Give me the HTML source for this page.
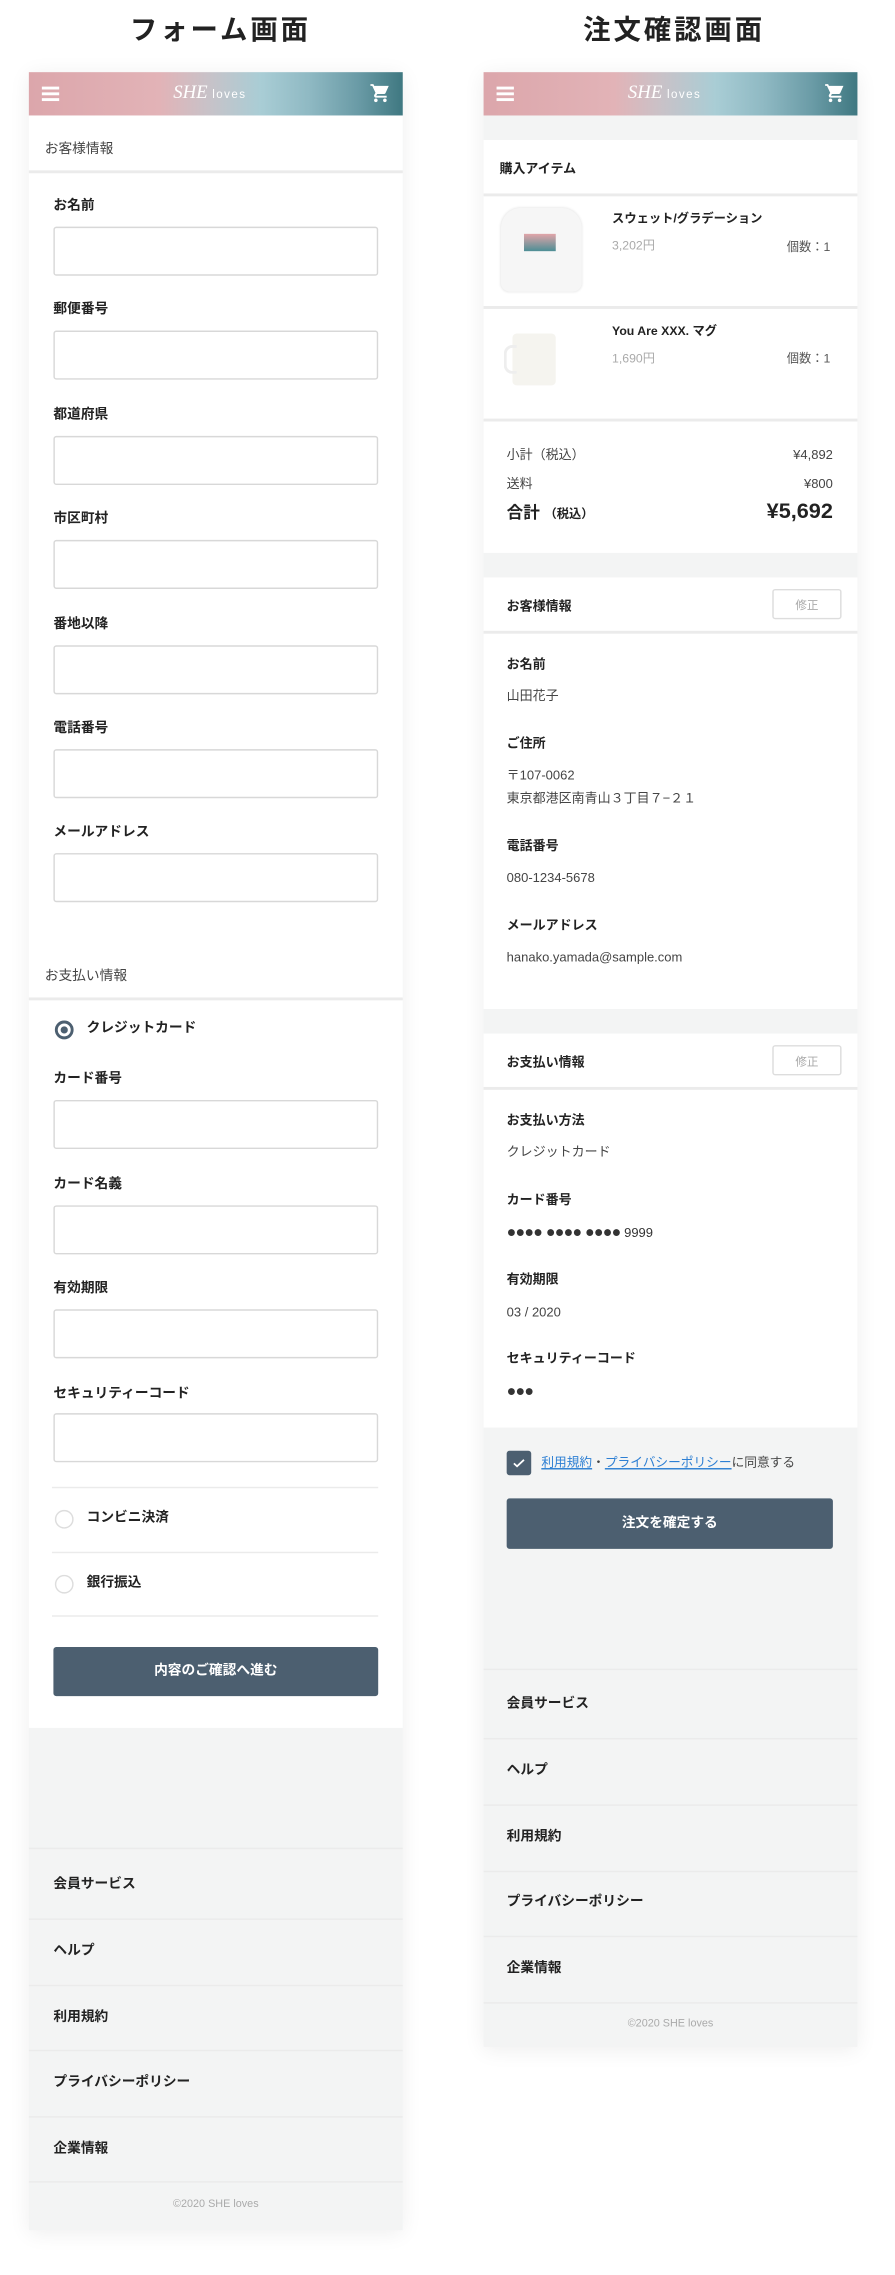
<!DOCTYPE html>
<html><head><meta charset="utf-8"><style>
html,body{margin:0;padding:0;background:#fff;width:895px;height:2275px;overflow:hidden}
#w{position:absolute;left:0;top:0;width:620px;height:1576px;transform:scale(1.4435);transform-origin:0 0;font-family:"Liberation Sans","Noto Sans CJK JP",sans-serif;color:#222}
.a{position:absolute}
.t{position:absolute;line-height:16px;white-space:nowrap}
.ph{position:absolute;background:#f3f4f4;box-shadow:0 2px 14px rgba(0,0,0,.07)}
.hd{position:absolute;left:0;right:0;top:0;height:30px;background:linear-gradient(90deg,#dca6ab 0%,#e2b3b7 35%,#c8c2c8 48%,#a9cdd5 62%,#8fb9c3 75%,#6a9ba6 88%,#3f7881 100%)}
.wh{position:absolute;left:0;right:0;background:#fff}
.ln{position:absolute;height:1px;background:#ebebeb}
.in{position:absolute;left:17px;width:225px;height:34px;border:1px solid #d8d8d8;border-radius:2px;background:#fff;box-sizing:border-box}
.lb{font-size:9.5px;font-weight:bold;color:#222}
.btn{position:absolute;background:#4c5f70;color:#fff;font-size:9.5px;font-weight:bold;text-align:center;border-radius:2px}
.fi{font-size:9.5px;font-weight:bold;color:#222}
.ed{position:absolute;width:48px;height:21px;border:1px solid #ddd;border-radius:2px;font-size:8px;color:#aaa;text-align:center;line-height:21px;box-sizing:border-box;background:#fff}
</style></head><body><div id="w">

<div class="t" style="left:90px;top:12px;font-size:19px;font-weight:bold;letter-spacing:2px;line-height:20px">フォーム画面</div>
<div class="t" style="left:404px;top:12px;font-size:19px;font-weight:bold;letter-spacing:2px;line-height:20px">注文確認画面</div>

<!-- LEFT PHONE -->
<div class="ph" style="left:20px;top:50px;width:259px;height:1495px">
 <div class="hd"><div class="a" style="left:9px;top:10px;width:12px;height:2px;background:#fff;box-shadow:0 4px 0 #fff,0 8px 0 #fff"></div>
  <div class="t" style="left:100px;top:6px;font-size:13px;color:#fff;font-style:italic;font-family:'Liberation Serif',serif">SHE<span style="font-size:8px;font-style:normal;font-family:'Liberation Sans',sans-serif;letter-spacing:1px"> loves</span></div>
  <svg class="a" style="left:236px;top:7px" width="15" height="15" viewBox="0 0 24 24" fill="#fff"><path d="M7 18c-1.1 0-2 .9-2 2s.9 2 2 2 2-.9 2-2-.9-2-2-2zM1 2v2h2l3.6 7.6-1.35 2.4c-.7 1.3.2 3 1.75 3h12v-2H7.4l1.1-2h7.45c.75 0 1.4-.4 1.75-1L21.3 4H5.2l-.9-2H1zm16 16c-1.1 0-2 .9-2 2s.9 2 2 2 2-.9 2-2-.9-2-2-2z"/></svg></div>
 <div class="wh" style="top:30px;height:1117px"></div>
  <div class="t" style="left:11px;top:46px;font-size:9.5px;color:#444">お客様情報</div>
  <div class="ln" style="left:0;right:0;top:68px;height:1.5px"></div>
  <div class="t lb" style="left:17px;top:85px">お名前</div><div class="in" style="top:107px"></div>
  <div class="t lb" style="left:17px;top:157px">郵便番号</div><div class="in" style="top:179px"></div>
  <div class="t lb" style="left:17px;top:230px">都道府県</div><div class="in" style="top:252px"></div>
  <div class="t lb" style="left:17px;top:302px">市区町村</div><div class="in" style="top:324px"></div>
  <div class="t lb" style="left:17px;top:375px">番地以降</div><div class="in" style="top:397px"></div>
  <div class="t lb" style="left:17px;top:447px">電話番号</div><div class="in" style="top:469px"></div>
  <div class="t lb" style="left:17px;top:519px">メールアドレス</div><div class="in" style="top:541px"></div>
  <div class="t" style="left:11px;top:619px;font-size:9.5px;color:#444">お支払い情報</div>
  <div class="ln" style="left:0;right:0;top:641px;height:1.5px"></div>
  <div class="a" style="left:18px;top:657px;width:9px;height:9px;border:2px solid #4c5f70;border-radius:50%"></div>
  <div class="a" style="left:22px;top:661px;width:5px;height:5px;background:#4c5f70;border-radius:50%"></div>
  <div class="t lb" style="left:40px;top:655px">クレジットカード</div>
  <div class="t lb" style="left:17px;top:690px">カード番号</div><div class="in" style="top:712px"></div>
  <div class="t lb" style="left:17px;top:763px">カード名義</div><div class="in" style="top:785px"></div>
  <div class="t lb" style="left:17px;top:835px">有効期限</div><div class="in" style="top:857px"></div>
  <div class="t lb" style="left:17px;top:908px">セキュリティーコード</div><div class="in" style="top:929px"></div>
  <div class="ln" style="left:16px;width:226px;top:980px"></div>
  <div class="a" style="left:18px;top:996px;width:11px;height:11px;border:1px solid #ddd;border-radius:50%"></div>
  <div class="t lb" style="left:40px;top:994px">コンビニ決済</div>
  <div class="ln" style="left:16px;width:226px;top:1025px"></div>
  <div class="a" style="left:18px;top:1041px;width:11px;height:11px;border:1px solid #ddd;border-radius:50%"></div>
  <div class="t lb" style="left:40px;top:1039px">銀行振込</div>
  <div class="ln" style="left:16px;width:226px;top:1069px"></div>
  <div class="btn" style="left:17px;top:1091px;width:225px;height:34px;line-height:34px">内容のご確認へ進む</div>
 <div class="ln" style="left:0;right:0;top:1230px"></div><div class="t fi" style="left:17px;top:1248px">会員サービス</div>
 <div class="ln" style="left:0;right:0;top:1279px"></div><div class="t fi" style="left:17px;top:1294px">ヘルプ</div>
 <div class="ln" style="left:0;right:0;top:1325px"></div><div class="t fi" style="left:17px;top:1340px">利用規約</div>
 <div class="ln" style="left:0;right:0;top:1370px"></div><div class="t fi" style="left:17px;top:1385px">プライバシーポリシー</div>
 <div class="ln" style="left:0;right:0;top:1416px"></div><div class="t fi" style="left:17px;top:1431px">企業情報</div>
 <div class="ln" style="left:0;right:0;top:1461px"></div><div class="t" style="left:0;right:0;text-align:center;top:1469px;font-size:7.5px;color:#aaa">©2020 SHE loves</div>
</div>

<!-- RIGHT PHONE -->
<div class="ph" style="left:335px;top:50px;width:259px;height:1368px">
 <div class="hd"><div class="a" style="left:9px;top:10px;width:12px;height:2px;background:#fff;box-shadow:0 4px 0 #fff,0 8px 0 #fff"></div>
  <div class="t" style="left:100px;top:6px;font-size:13px;color:#fff;font-style:italic;font-family:'Liberation Serif',serif">SHE<span style="font-size:8px;font-style:normal;font-family:'Liberation Sans',sans-serif;letter-spacing:1px"> loves</span></div>
  <svg class="a" style="left:236px;top:7px" width="15" height="15" viewBox="0 0 24 24" fill="#fff"><path d="M7 18c-1.1 0-2 .9-2 2s.9 2 2 2 2-.9 2-2-.9-2-2-2zM1 2v2h2l3.6 7.6-1.35 2.4c-.7 1.3.2 3 1.75 3h12v-2H7.4l1.1-2h7.45c.75 0 1.4-.4 1.75-1L21.3 4H5.2l-.9-2H1zm16 16c-1.1 0-2 .9-2 2s.9 2 2 2 2-.9 2-2-.9-2-2-2z"/></svg></div>
 <div class="wh" style="top:47px;height:286px">
  <div class="t fi" style="left:11px;top:12px;font-size:9px">購入アイテム</div>
  <div class="ln" style="left:0;right:0;top:37px;height:1.5px"></div>
  <div class="a" style="left:12px;top:47px;width:56px;height:58px;background:#f6f6f6;border-radius:14px 14px 6px 6px;box-shadow:0 0 2px #e4e4e4"></div>
  <div class="a" style="left:28px;top:65px;width:22px;height:12px;background:linear-gradient(#e2a5a9,#4c8e95)"></div>
  <div class="t" style="left:89px;top:46px;font-size:8.5px;font-weight:bold">スウェット/グラデーション</div>
  <div class="t" style="left:89px;top:65px;font-size:8.5px;color:#aaa">3,202円</div>
  <div class="t" style="left:210px;top:66px;font-size:8.5px;color:#555">個数：1</div>
  <div class="ln" style="left:0;right:0;top:115px;height:1.5px"></div>
  <div class="a" style="left:20px;top:134px;width:30px;height:36px;background:#f5f4ef;border-radius:3px"></div>
  <div class="a" style="left:14px;top:142px;width:7px;height:16px;border:2px solid #eee;border-radius:6px 0 0 6px;border-right:0"></div>
  <div class="t" style="left:89px;top:124px;font-size:8.5px;font-weight:bold">You Are XXX. マグ</div>
  <div class="t" style="left:89px;top:143px;font-size:8.5px;color:#aaa">1,690円</div>
  <div class="t" style="left:210px;top:143px;font-size:8.5px;color:#555">個数：1</div>
  <div class="ln" style="left:0;right:0;top:193px;height:1.5px"></div>
  <div class="t" style="left:16px;top:210px;font-size:9px;color:#444">小計（税込）</div><div class="t" style="right:17px;top:210px;font-size:9px;color:#444">¥4,892</div>
  <div class="t" style="left:16px;top:230px;font-size:9px;color:#444">送料</div><div class="t" style="right:17px;top:230px;font-size:9px;color:#444">¥800</div>
  <div class="t" style="left:16px;top:251px;font-size:11.5px;font-weight:bold">合計 <span style="font-size:8.5px">（税込）</span></div><div class="t" style="right:17px;top:250px;font-size:15px;font-weight:bold">¥5,692</div>
 </div>
 <div class="wh" style="top:350px;height:299px">
  <div class="t fi" style="left:16px;top:12px;font-size:9px">お客様情報</div>
  <div class="ed" style="left:200px;top:8px">修正</div>
  <div class="ln" style="left:0;right:0;top:37px;height:1.5px"></div>
  <div class="t fi" style="left:16px;top:52px;font-size:9px">お名前</div>
  <div class="t" style="left:16px;top:74px;font-size:9px;color:#444">山田花子</div>
  <div class="t fi" style="left:16px;top:107px;font-size:9px">ご住所</div>
  <div class="t" style="left:16px;top:129px;font-size:9px;color:#444">〒107-0062</div>
  <div class="t" style="left:16px;top:145px;font-size:9px;color:#444">東京都港区南青山３丁目７−２１</div>
  <div class="t fi" style="left:16px;top:178px;font-size:9px">電話番号</div>
  <div class="t" style="left:16px;top:200px;font-size:9px;color:#444">080-1234-5678</div>
  <div class="t fi" style="left:16px;top:233px;font-size:9px">メールアドレス</div>
  <div class="t" style="left:16px;top:255px;font-size:9px;color:#444">hanako.yamada@sample.com</div>
 </div>
 <div class="wh" style="top:666px;height:273px">
  <div class="t fi" style="left:16px;top:12px;font-size:9px">お支払い情報</div>
  <div class="ed" style="left:200px;top:8px">修正</div>
  <div class="ln" style="left:0;right:0;top:37px;height:1.5px"></div>
  <div class="t fi" style="left:16px;top:52px;font-size:9px">お支払い方法</div>
  <div class="t" style="left:16px;top:74px;font-size:9px;color:#444">クレジットカード</div>
  <div class="t fi" style="left:16px;top:107px;font-size:9px">カード番号</div>
  <div class="t" style="left:16px;top:130px;font-size:9px;color:#333"><span style="font-size:11px;letter-spacing:-0.5px">●●●● ●●●● ●●●●</span> 9999</div>
  <div class="t fi" style="left:16px;top:162px;font-size:9px">有効期限</div>
  <div class="t" style="left:16px;top:185px;font-size:9px;color:#444">03 / 2020</div>
  <div class="t fi" style="left:16px;top:217px;font-size:9px">セキュリティーコード</div>
  <div class="t" style="left:16px;top:240px;font-size:11px;color:#333;letter-spacing:-0.5px">●●●</div>
 </div>
 <div class="a" style="left:16px;top:955px;width:17px;height:17px;background:#4c5f70;border-radius:2px"></div>
 <svg class="a" style="left:19px;top:958px" width="11" height="11" viewBox="0 0 11 11"><path d="M2 5.8l2.2 2 4.8-4.5" stroke="#fff" stroke-width="1.2" fill="none"/></svg>
 <div class="t" style="left:40px;top:955px;font-size:8.8px;color:#444"><span style="color:#2d7fd3;text-decoration:underline">利用規約</span>・<span style="color:#2d7fd3;text-decoration:underline">プライバシーポリシー</span>に同意する</div>
 <div class="btn" style="left:16px;top:988px;width:226px;height:35px;line-height:35px">注文を確定する</div>
 <div class="ln" style="left:0;right:0;top:1106px"></div><div class="t fi" style="left:16px;top:1123px">会員サービス</div>
 <div class="ln" style="left:0;right:0;top:1154px"></div><div class="t fi" style="left:16px;top:1169px">ヘルプ</div>
 <div class="ln" style="left:0;right:0;top:1200px"></div><div class="t fi" style="left:16px;top:1215px">利用規約</div>
 <div class="ln" style="left:0;right:0;top:1246px"></div><div class="t fi" style="left:16px;top:1260px">プライバシーポリシー</div>
 <div class="ln" style="left:0;right:0;top:1291px"></div><div class="t fi" style="left:16px;top:1306px">企業情報</div>
 <div class="ln" style="left:0;right:0;top:1337px"></div><div class="t" style="left:0;right:0;text-align:center;top:1344px;font-size:7.5px;color:#aaa">©2020 SHE loves</div>
</div>

</div></body></html>
